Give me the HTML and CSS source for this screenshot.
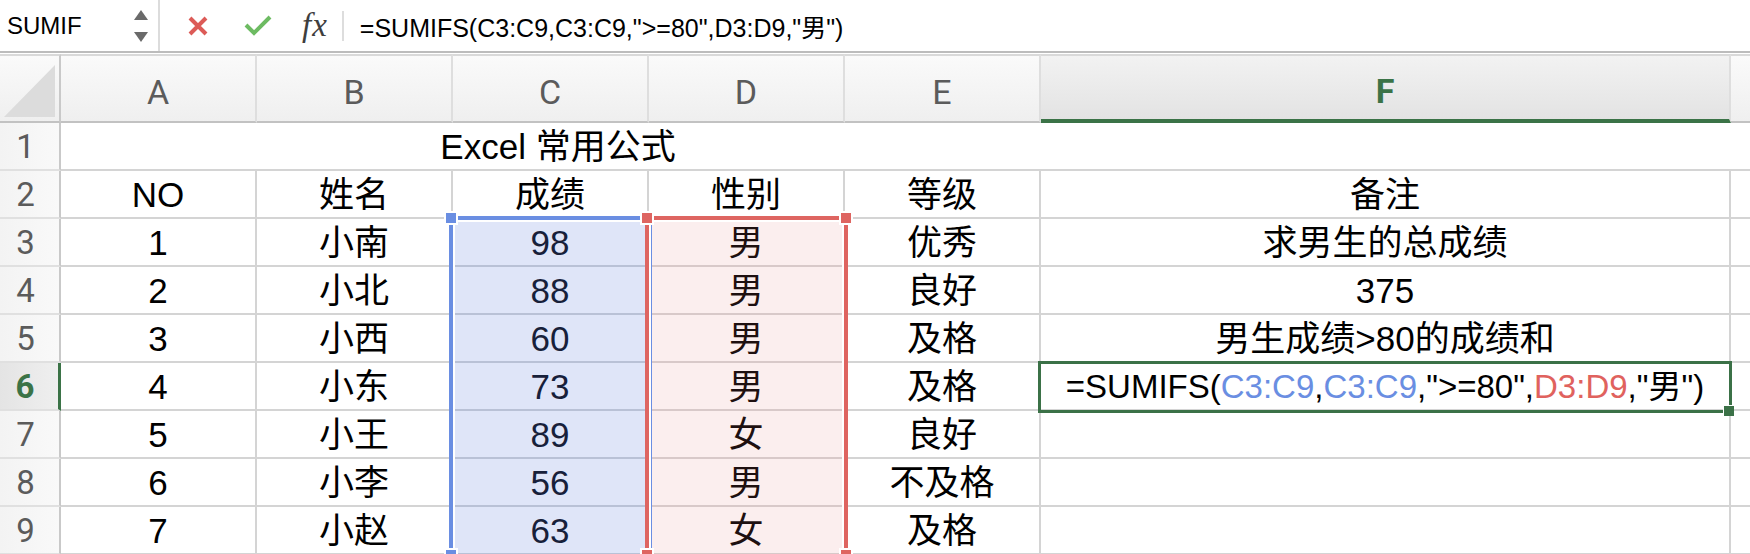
FILE: index.html
```html
<!DOCTYPE html>
<html lang="zh-CN">

<head>
    <meta charset="UTF-8">
    <title>Excel 常用公式</title>
    <link rel="stylesheet" href="styles.css">
</head>

<body>
    <div class="formula-bar">
        <div class="name-box">
            <span class="name">SUMIF</span>
            <span class="spin"><i class="up"></i><i class="down"></i></span>
        </div>
        <svg class="icon-x" width="22" height="22" viewBox="0 0 22 22">
            <path d="M3 3 L19 19 M19 3 L3 19" />
        </svg>
        <svg class="icon-ok" width="28" height="22" viewBox="0 0 28 22">
            <path d="M2 10 L10 18 L26 2" />
        </svg>
        <span class="fx">fx</span>
        <span class="sep"></span>
        <div class="formula">=SUMIFS(C3:C9,C3:C9,"&gt;=80",D3:D9,"男")</div>
    </div>

    <div class="sheet">
        <!-- column headers -->
        <div class="col-head corner">
            <svg width="52" height="52" viewBox="0 0 52 52"><polygon points="51,0 51,52 0,52" /></svg>
        </div>
        <div class="col-head">A</div>
        <div class="col-head">B</div>
        <div class="col-head">C</div>
        <div class="col-head">D</div>
        <div class="col-head">E</div>
        <div class="col-head current">F</div>
        <div class="col-head last"></div>

        <!-- row 1 -->
        <div class="row-head">1</div>
        <div class="cell title">Excel 常用公式</div>
        <div class="cell open"></div>
        <div class="cell open"></div>

        <!-- row 2 -->
        <div class="row-head">2</div>
        <div class="cell">NO</div>
        <div class="cell">姓名</div>
        <div class="cell">成绩</div>
        <div class="cell">性别</div>
        <div class="cell">等级</div>
        <div class="cell">备注</div>
        <div class="cell open"></div>

        <!-- row 3 -->
        <div class="row-head">3</div>
        <div class="cell">1</div>
        <div class="cell">小南</div>
        <div class="cell blue">98</div>
        <div class="cell red">男</div>
        <div class="cell">优秀</div>
        <div class="cell">求男生的总成绩</div>
        <div class="cell open"></div>

        <!-- row 4 -->
        <div class="row-head">4</div>
        <div class="cell">2</div>
        <div class="cell">小北</div>
        <div class="cell blue">88</div>
        <div class="cell red">男</div>
        <div class="cell">良好</div>
        <div class="cell">375</div>
        <div class="cell open"></div>

        <!-- row 5 -->
        <div class="row-head">5</div>
        <div class="cell">3</div>
        <div class="cell">小西</div>
        <div class="cell blue">60</div>
        <div class="cell red">男</div>
        <div class="cell">及格</div>
        <div class="cell">男生成绩&gt;80的成绩和</div>
        <div class="cell open"></div>

        <!-- row 6 -->
        <div class="row-head current">6</div>
        <div class="cell">4</div>
        <div class="cell">小东</div>
        <div class="cell blue">73</div>
        <div class="cell red">男</div>
        <div class="cell">及格</div>
        <div class="cell edit">=SUMIFS(<span class="ref-c">C3:C9</span>,<span class="ref-c">C3:C9</span>,"&gt;=80",<span class="ref-d">D3:D9</span>,"男")</div>
        <div class="cell open"></div>

        <!-- row 7 -->
        <div class="row-head">7</div>
        <div class="cell">5</div>
        <div class="cell">小王</div>
        <div class="cell blue">89</div>
        <div class="cell red">女</div>
        <div class="cell">良好</div>
        <div class="cell"></div>
        <div class="cell open"></div>

        <!-- row 8 -->
        <div class="row-head">8</div>
        <div class="cell">6</div>
        <div class="cell">小李</div>
        <div class="cell blue">56</div>
        <div class="cell red">男</div>
        <div class="cell">不及格</div>
        <div class="cell"></div>
        <div class="cell open"></div>

        <!-- row 9 -->
        <div class="row-head">9</div>
        <div class="cell">7</div>
        <div class="cell">小赵</div>
        <div class="cell blue">63</div>
        <div class="cell red">女</div>
        <div class="cell">及格</div>
        <div class="cell"></div>
        <div class="cell open"></div>

        <!-- range highlights while editing F6 -->
        <div class="range range-c"></div>
        <div class="range range-d"></div>
        <i class="handle h-c top"></i>
        <i class="handle h-d1 top"></i>
        <i class="handle h-d2 top"></i>
        <i class="handle h-c bottom"></i>
        <i class="handle h-d1 bottom"></i>
        <i class="handle h-d2 bottom"></i>
        <div class="active"></div>
        <i class="fill-handle"></i>
    </div>
</body>

</html>
```

FILE: styles.css
```css
html,
body {
    margin: 0;
    padding: 0;
}

body {
    width: 1750px;
    height: 554px;
    overflow: hidden;
    background: #fff;
    font-family: "Liberation Sans", "Noto Sans CJK SC", sans-serif;
    color: #000;
}

/* formula bar */

.formula-bar {
    display: flex;
    align-items: center;
    height: 51px;
    border-bottom: 2px solid #bcbcbc;
}

.name-box {
    display: flex;
    align-items: center;
    box-sizing: border-box;
    width: 160px;
    height: 100%;
    padding-left: 7px;
    border-right: 2px solid #dcdcdc;
    font-size: 24px;
}

.name-box .name {
    flex: 1;
}

.spin {
    display: flex;
    flex-direction: column;
    gap: 12px;
    margin-right: 10px;
}

.spin i {
    width: 0;
    height: 0;
    border-left: 7px solid transparent;
    border-right: 7px solid transparent;
}

.spin .up {
    border-bottom: 10px solid #6a6a6a;
}

.spin .down {
    border-top: 10px solid #6a6a6a;
}

.icon-x {
    margin-left: 27px;
    fill: none;
    stroke: #dc5b57;
    stroke-width: 4;
}

.icon-ok {
    margin-left: 35px;
    fill: none;
    stroke: #6dbb62;
    stroke-width: 4;
}

.fx {
    margin-left: 30px;
    font: italic 33px "Liberation Serif", serif;
    color: #3e3e3e;
    letter-spacing: 1px;
}

.sep {
    width: 2px;
    height: 30px;
    margin-left: 14px;
    background: #dddddd;
}

.formula {
    margin-left: 16px;
    font-size: 25px;
}

/* sheet grid */

.sheet {
    position: relative;
    display: grid;
    grid-template-columns: 61px repeat(5, 196px) 690px 1fr;
    grid-template-rows: 69px repeat(9, 48px);
    height: 500px;
    margin-top: 1px;
    overflow: hidden;
}

.col-head {
    display: flex;
    align-items: center;
    justify-content: center;
    box-sizing: border-box;
    padding-top: 6px;
    border-top: 2px solid #d9d9d9;
    border-bottom: 2px solid #c2c2c2;
    border-right: 2px solid #dedede;
    background: linear-gradient(#fafafa, #efefef);
    font: 34px Roboto, sans-serif;
    color: #5b5b5b;
}

.col-head.corner {
    align-items: flex-end;
    justify-content: flex-end;
    padding: 0 3px 4px 0;
    border-right-color: #c9c9c9;
}

.corner polygon {
    fill: #dcdcdc;
}

.col-head.current {
    border-bottom: 4px solid #3b7347;
    background: linear-gradient(#f2f2f2, #e3e3e3);
    color: #3b7347;
    font-weight: 700;
}

.col-head.last {
    border-right: none;
}

.row-head {
    display: flex;
    align-items: center;
    justify-content: center;
    box-sizing: border-box;
    padding-right: 8px;
    border-right: 2px solid #c9c9c9;
    border-bottom: 2px solid #e0e0e0;
    background: linear-gradient(to right, #f3f3f3, #f9f9f9);
    font: 33px Roboto, sans-serif;
    color: #5b5b5b;
}

.row-head.current {
    border-right: 3px solid #3b7347;
    background: linear-gradient(to right, #e4e4e4, #efefef);
    color: #3b7347;
    font-weight: 700;
}

.cell {
    display: flex;
    align-items: center;
    justify-content: center;
    box-sizing: border-box;
    border-right: 2px solid #d4d4d4;
    border-bottom: 2px solid #d4d4d4;
    font-size: 35px;
    line-height: 1;
    white-space: nowrap;
}

.cell.title {
    grid-column: span 5;
    border-right: none;
    padding-left: 14px;
}

.cell.open {
    border-right: none;
}

.cell.blue {
    background: #dfe5f8;
    border-bottom-color: #b9c1d6;
    color: #17203a;
}

.cell.red {
    background: #fbeeee;
    border-bottom-color: #d8c9c9;
    color: #1e1010;
}

.cell.edit {
    font-size: 33px;
}

.ref-c {
    color: #6a8ee2;
}

.ref-d {
    color: #e0625e;
}

/* overlays */

.range {
    position: absolute;
    top: 162px;
    height: 400px;
    box-sizing: border-box;
    border: 4px solid;
    box-shadow: inset 0 0 0 2px #fff;
}

.range-c {
    left: 449px;
    width: 203px;
    border-color: #6a8ee2;
}

.range-d {
    left: 645px;
    width: 203px;
    border-color: #de6561;
}

.handle {
    position: absolute;
    width: 10px;
    height: 10px;
    border: 2px solid #fff;
}

.handle.top {
    top: 157px;
}

.handle.bottom {
    top: 494px;
}

.h-c {
    left: 444px;
    background: #6a8ee2;
}

.h-d1 {
    left: 640px;
    background: #de6561;
}

.h-d2 {
    left: 839px;
    background: #de6561;
}

.active {
    position: absolute;
    left: 1038px;
    top: 307px;
    width: 694px;
    height: 52px;
    box-sizing: border-box;
    border: 3px solid #3b7147;
}

.fill-handle {
    position: absolute;
    left: 1723px;
    top: 351px;
    width: 10px;
    height: 10px;
    border-left: 1px solid #fff;
    border-top: 1px solid #fff;
    background: #3b7147;
}
```
